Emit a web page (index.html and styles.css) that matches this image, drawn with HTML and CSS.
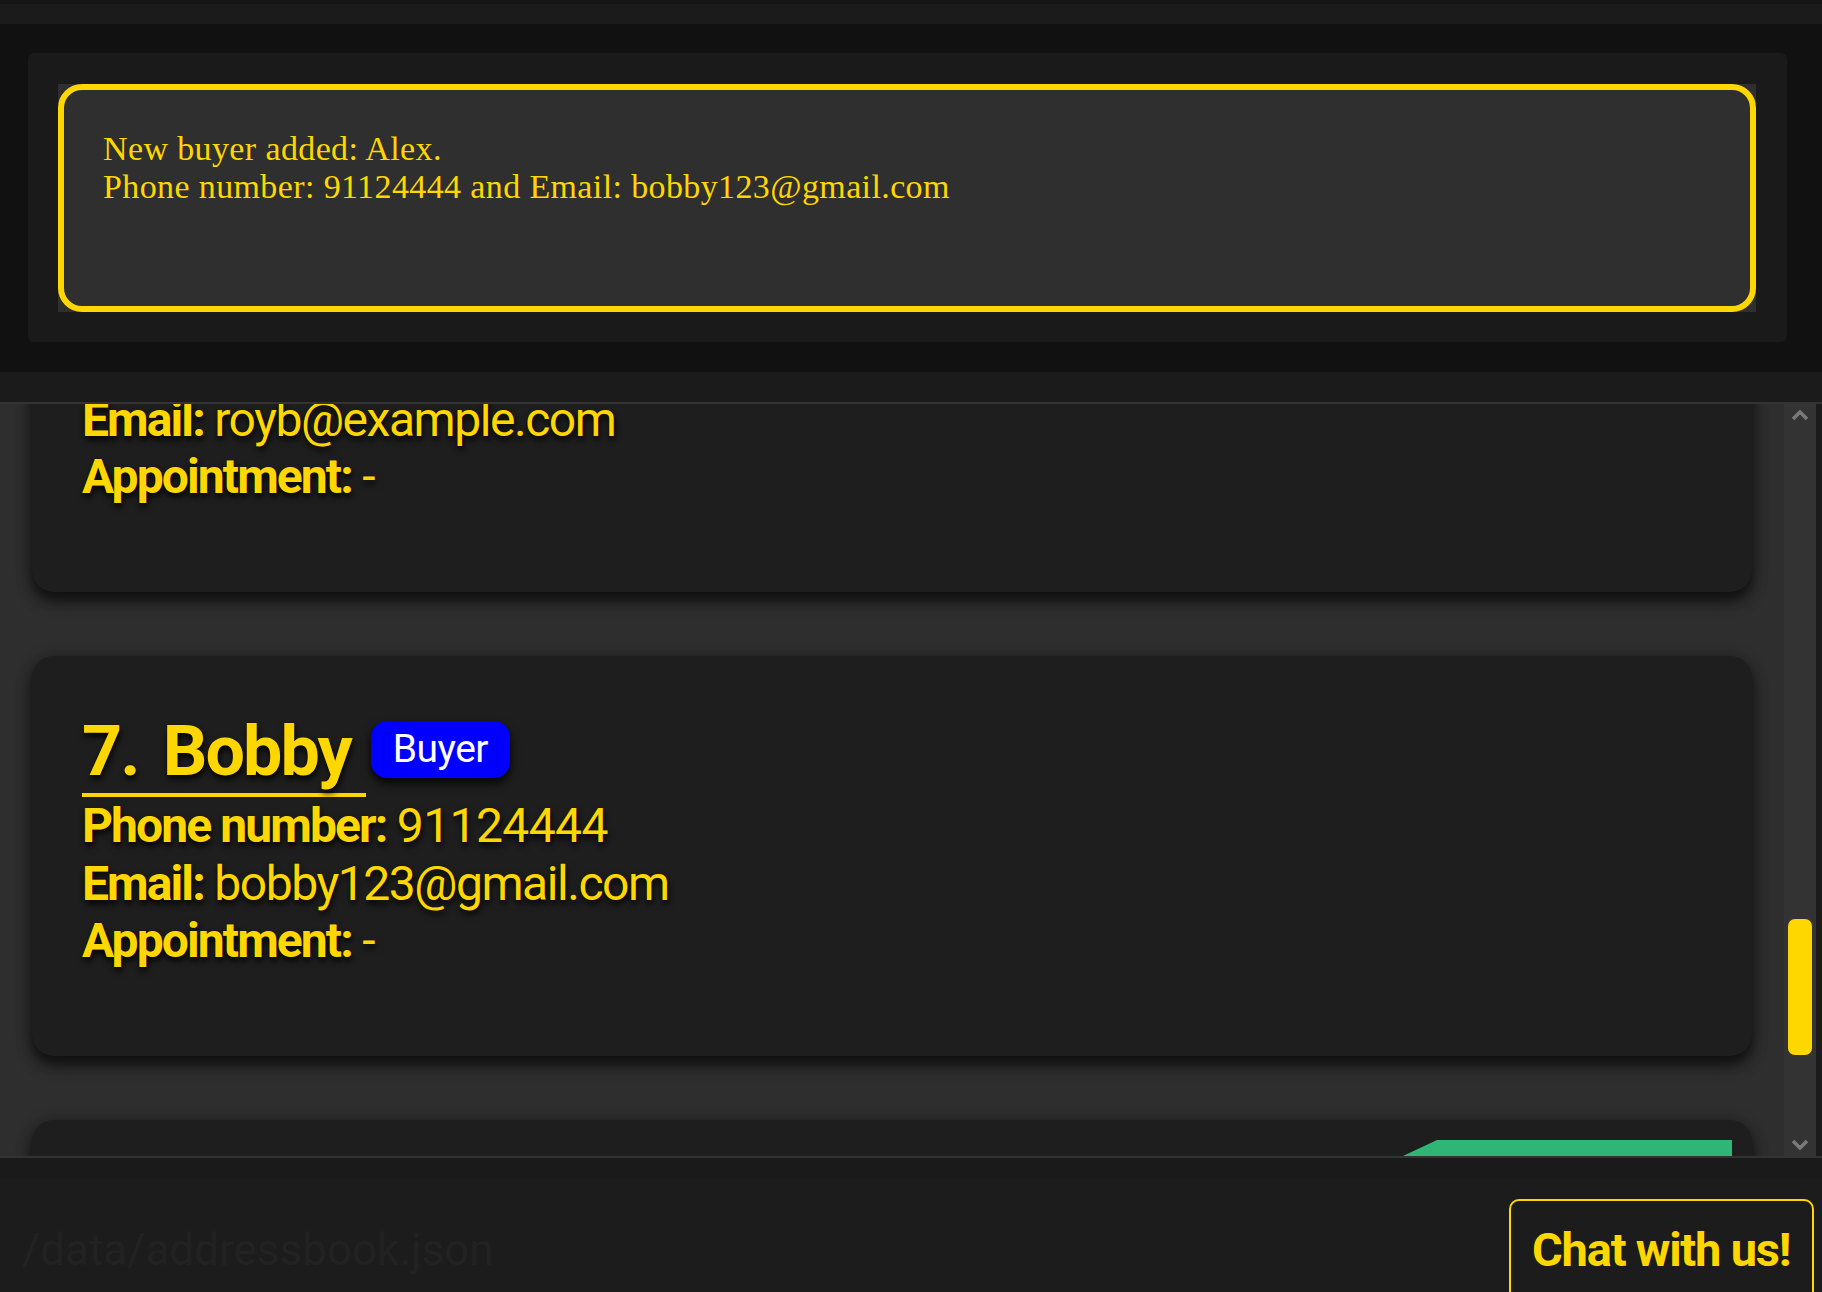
FILE: index.html
```html
<!DOCTYPE html>
<html lang="en">
<head>
<meta charset="utf-8">
<title>Address book</title>
<link rel="stylesheet" href="styles.css">
</head>
<body>
<div class="app">
  <div class="topbar"></div>
  <section class="result-section">
    <div class="result-panel">
      <div class="result-box">
        <div class="result-text">New buyer added: Alex.<br>Phone number: 91124444 and Email: bobby123@gmail.com</div>
      </div>
    </div>
  </section>
  <div class="band"></div>
  <div class="list-row">
    <div class="list">
      <div class="list-inner">
        <article class="card">
          <div class="card-head">
            <h2 class="card-title"><span class="idx">6.</span> Roy</h2>
            <span class="badge">Buyer</span>
          </div>
          <p class="field"><b>Phone number:</b> 92624417</p>
          <p class="field"><b>Email:</b> royb@example.com</p>
          <p class="field"><b>Appointment:</b> -</p>
        </article>
        <article class="card">
          <div class="card-head">
            <h2 class="card-title"><span class="idx">7.</span> Bobby</h2>
            <span class="badge">Buyer</span>
          </div>
          <p class="field"><b>Phone number:</b> <span class="num">91124444</span></p>
          <p class="field"><b>Email:</b> bobby123@gmail.com</p>
          <p class="field"><b>Appointment:</b> -</p>
        </article>
        <article class="card">
          <div class="ribbon"></div>
          <div class="card-head">
            <h2 class="card-title"><span class="idx">8.</span> Alex</h2>
            <span class="badge">Buyer</span>
          </div>
          <p class="field"><b>Phone number:</b> <span class="num">91124444</span></p>
          <p class="field"><b>Email:</b> bobby123@gmail.com</p>
          <p class="field"><b>Appointment:</b> -</p>
        </article>
      </div>
    </div>
    <div class="scrollbar">
      <svg class="arrow" width="20" height="14" viewBox="0 0 20 14"><path d="M3 11 L10 4 L17 11" fill="none" stroke="#7a7a7a" stroke-width="3.5"/></svg>
      <div class="track"><div class="thumb"></div></div>
      <svg class="arrow" width="20" height="14" viewBox="0 0 20 14"><path d="M3 3 L10 10 L17 3" fill="none" stroke="#7a7a7a" stroke-width="3.5"/></svg>
    </div>
    <div class="edge"></div>
  </div>
  <footer class="footer">
    <span class="path">/data/addressbook.json</span>
  </footer>
  <a class="chat">Chat with us!</a>
</div>
</body>
</html>
```
FILE: styles.css
```css
* { box-sizing: border-box; }
html, body { margin: 0; padding: 0; }
body {
  background: #111111;
  width: 1822px;
  height: 1292px;
  overflow: hidden;
  font-family: Roboto, "Liberation Sans", sans-serif;
}
.app {
  position: relative;
  display: flex;
  flex-direction: column;
  height: 1292px;
}
.topbar {
  height: 24px;
  background: #1b1b1b;
  border-top: 4px solid #151515;
  flex: none;
}
.result-section {
  flex: none;
  height: 348px;
  padding: 29px 35px 30px 28px;
  background: #111111;
}
.result-panel {
  height: 100%;
  background: #1a1a1a;
  border-radius: 6px;
  padding: 31px 31px 30px 30px;
}
.result-box {
  height: 228px;
  background: #2f2f2f;
}
.result-text {
  height: 100%;
  border: 6px solid #ffd700;
  border-radius: 24px;
  padding: 40px 39px;
  font-family: "Liberation Serif", "Times New Roman", serif;
  font-size: 34px;
  line-height: 38px;
  letter-spacing: 0.38px;
  color: #ffd700;
}
.band {
  flex: none;
  height: 32px;
  background: #1b1b1b;
  border-bottom: 2px solid #333333;
}
.list-row {
  flex: none;
  height: 752px;
  display: flex;
  background: #1b1b1b;
}
.list {
  flex: none;
  width: 1784px;
  height: 100%;
  overflow: hidden;
  background: #2e2e2e;
}
.list-inner {
  margin-top: -212px;
  padding: 0 32px;
  display: flex;
  flex-direction: column;
  gap: 64px;
}
.card {
  position: relative;
  height: 400px;
  background: #1e1e1e;
  border-radius: 22px;
  padding: 55px 50px 0 50px;
  box-shadow: 0 10px 14px rgba(0,0,0,0.55), 0 2px 16px rgba(0,0,0,0.35);
  color: #ffd700;
  text-shadow: 1px 4px 6px rgba(0,0,0,0.9);
}
.card-head {
  display: flex;
  align-items: flex-start;
  gap: 5px;
}
.card-title {
  margin: 0;
  font-size: 70px;
  line-height: 80px;
  font-weight: 700;
  letter-spacing: -2px;
  padding: 0 15px 2px 0;
  border-bottom: 4px solid #ffd700;
}
.idx { margin-right: 9px; }
.badge {
  margin-top: 10px;
  height: 57px;
  padding: 0 22px 0 22px;
  background: #0000ff;
  color: #ffffff;
  border-radius: 16px;
  font-size: 39px;
  line-height: 57px;
  letter-spacing: -0.5px;
  text-shadow: none;
  box-shadow: 0 5px 10px rgba(0,0,0,0.85);
}
.field {
  margin: 0;
  font-size: 48px;
  line-height: 57.5px;
  font-weight: 400;
  letter-spacing: -1.45px;
}
.field b { font-weight: 700; letter-spacing: -1.9px; }
.field .num { letter-spacing: -0.6px; }
.ribbon {
  position: absolute;
  top: 20px;
  right: 20px;
  width: 329px;
  height: 40px;
  background: #2fb677;
  clip-path: polygon(34px 0, 100% 0, 100% 100%, -51px 100%);
}
.scrollbar {
  flex: none;
  width: 32px;
  height: 100%;
  background: #333333;
  display: flex;
  flex-direction: column;
  align-items: center;
}
.arrow { flex: none; margin: 4px 0; }
.track {
  flex: 1;
  width: 24px;
  padding-top: 493px;
}
.thumb {
  width: 24px;
  height: 136px;
  background: #ffd700;
  border-radius: 7px;
}
.edge {
  flex: none;
  width: 6px;
  background: #1b1b1b;
}
.footer {
  flex: 1;
  background: #1c1c1c;
  border-top: 2px solid #333333;
  box-shadow: inset 0 20px 0 #1a1a1a;
  padding: 66px 0 0 22px;
}
.path {
  font-size: 44px;
  line-height: 52px;
  color: #222222;
}
.chat {
  position: absolute;
  left: 1509px;
  top: 1199px;
  width: 305px;
  height: 120px;
  background: #1c1c1c;
  border: 2px solid #ffd700;
  border-radius: 10px;
  padding: 21px 0 0 21px;
  font-family: Roboto, "Liberation Sans", sans-serif;
  font-weight: 700;
  font-size: 47px;
  line-height: 56px;
  letter-spacing: -1.2px;
  color: #ffd700;
  white-space: nowrap;
}
```
